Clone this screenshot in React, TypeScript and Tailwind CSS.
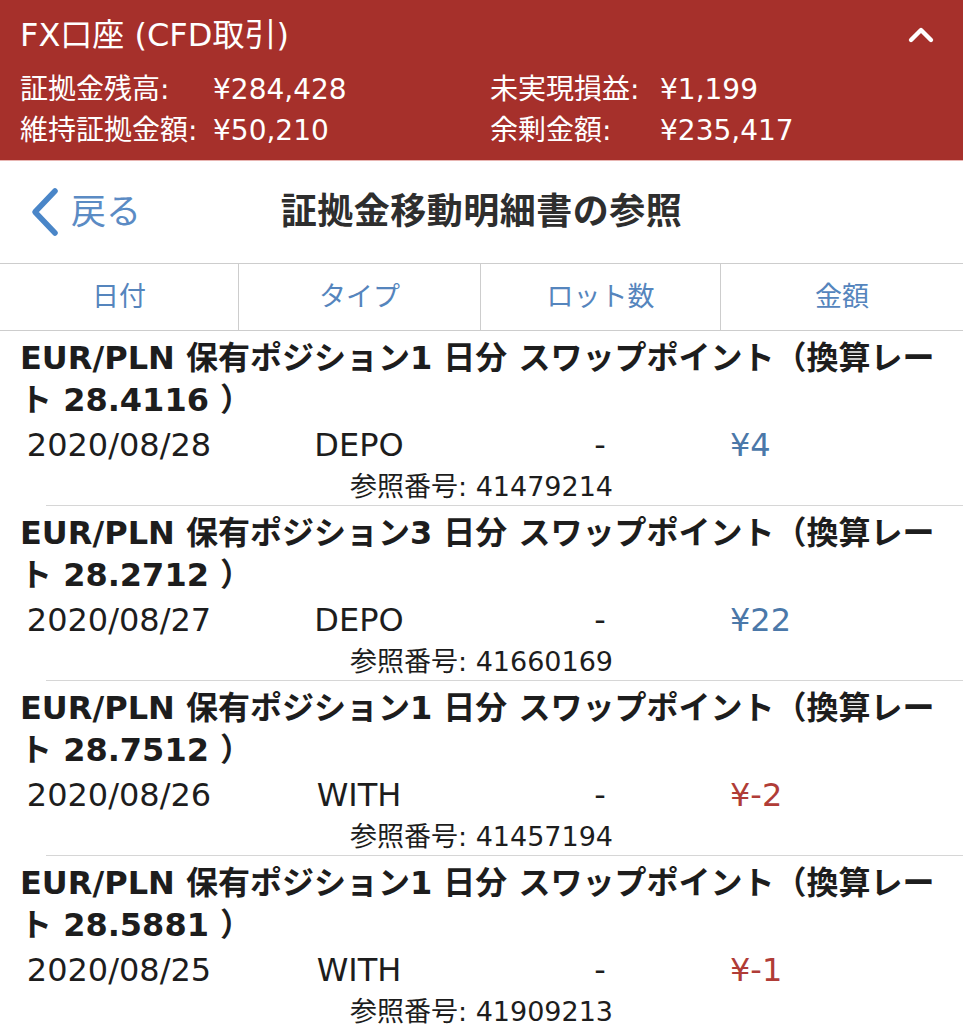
import { ChevronUp } from 'lucide-react'

const entries = [
  { days: 1, rate: '28.4116', date: '2020/08/28', type: 'DEPO', amount: '¥4', ref: '41479214' },
  { days: 3, rate: '28.2712', date: '2020/08/27', type: 'DEPO', amount: '¥22', ref: '41660169' },
  { days: 1, rate: '28.7512', date: '2020/08/26', type: 'WITH', amount: '¥-2', ref: '41457194' },
  { days: 1, rate: '28.5881', date: '2020/08/25', type: 'WITH', amount: '¥-1', ref: '41909213' },
]

const font = "font-['DejaVu_Sans','Noto_Sans_CJK_JP',sans-serif]"

export default function App() {
  return (
    <div className={`w-[963px] h-[1024px] overflow-hidden bg-white ${font}`}>
      {/* 口座サマリー */}
      <header className="h-[160px] bg-[#a6302b] text-white px-5 pt-[13px]">
        <div className="flex items-center justify-between h-[44px]">
          <h1 className="text-[32px] leading-[44px]">FX口座 (CFD取引)</h1>
          <ChevronUp className="w-[40px] h-[40px] mr-[2px]" strokeWidth={2.6} />
        </div>
        <div className="mt-[12px] grid grid-cols-[470px_1fr] text-[28px] leading-[41px]">
          <div className="flex">
            <span className="w-[193px]">証拠金残高:</span>
            <span>¥284,428</span>
          </div>
          <div className="flex">
            <span className="w-[170px]">未実現損益:</span>
            <span>¥1,199</span>
          </div>
          <div className="flex">
            <span className="w-[193px]">維持証拠金額:</span>
            <span>¥50,210</span>
          </div>
          <div className="flex">
            <span className="w-[170px]">余剰金額:</span>
            <span>¥235,417</span>
          </div>
        </div>
      </header>

      {/* ナビゲーション */}
      <nav className="h-[103px] grid grid-cols-[1fr_auto_1fr] items-center border-t border-[#e8b5b2]">
        <button className="flex items-center gap-[10px] pl-[29px] text-[#5b8bc4]">
          <svg width="32" height="50" viewBox="0 0 32 50" fill="none">
            <path d="M26 4 L6 25 L26 46" stroke="#4a86c8" strokeWidth="5.5" strokeLinecap="round" strokeLinejoin="round" />
          </svg>
          <span className="text-[35px] leading-none">戻る</span>
        </button>
        <h2 className="text-[36px] font-bold text-[#2e2e2e] tracking-[0.5px]">証拠金移動明細書の参照</h2>
        <div />
      </nav>

      {/* テーブルヘッダー */}
      <div className="grid grid-cols-[238px_242px_240px_1fr] h-[68px] border-y border-[#cdcdcd] text-[27px] text-[#5585bd]">
        <div className="flex items-center justify-center">日付</div>
        <div className="flex items-center justify-center border-l border-[#cdcdcd]">タイプ</div>
        <div className="flex items-center justify-center border-l border-[#cdcdcd]">ロット数</div>
        <div className="flex items-center justify-center border-l border-[#cdcdcd]">金額</div>
      </div>

      {entries.map((e) => (
        <div key={e.ref} className="text-[#1d1d1d]">
          <div className="pt-[6px] pl-5 pr-[8px] text-[32px] font-bold leading-[42px]">
            EUR/PLN 保有ポジション{e.days} 日分 スワップポイント（換算レート {e.rate} ）
          </div>
          <div className="grid grid-cols-[238px_242px_240px_1fr] h-[48px] items-center text-[32px]">
            <div className="text-center">{e.date}</div>
            <div className="text-center">{e.type}</div>
            <div className="text-center">-</div>
            <div className={`pl-[10px] ${e.type === 'DEPO' ? 'text-[#4b78a9]' : 'text-[#b03c37]'}`}>
              {e.amount}
            </div>
          </div>
          <div className="h-[36px] flex items-center justify-center text-[27px]">
            参照番号: {e.ref}
          </div>
          <div className="ml-[46px] h-px bg-[#d6d6d6]" />
        </div>
      ))}
    </div>
  )
}
